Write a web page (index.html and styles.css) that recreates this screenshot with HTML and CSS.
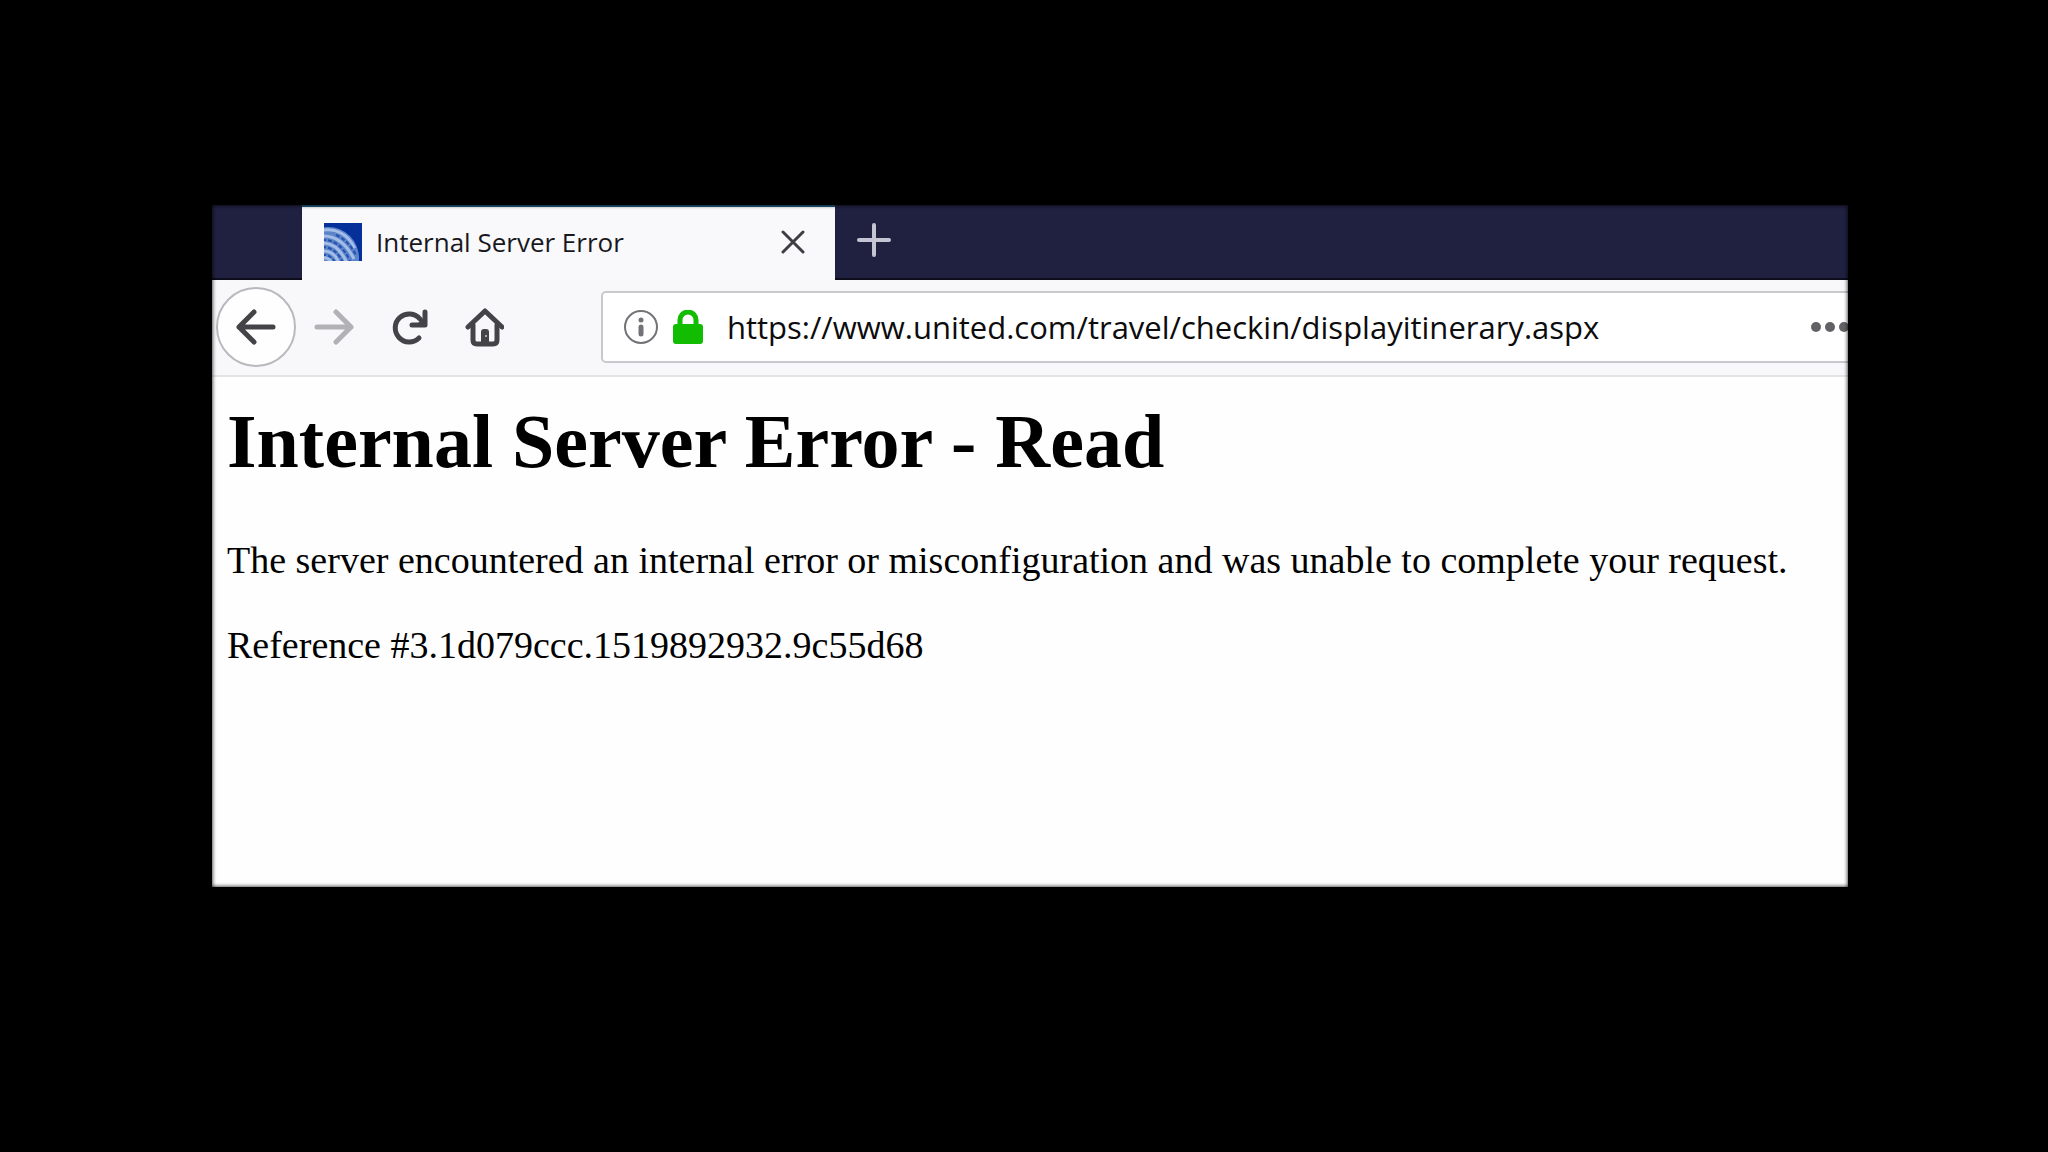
FILE: index.html
```html
<!DOCTYPE html>
<html lang="en">
<head>
  <meta charset="UTF-8" />
  <title>Internal Server Error</title>
  <link rel="stylesheet" href="styles.css">
</head>
<body>
  <div class="window">
    <div class="tabs">
      <div class="tab">
        <svg class="favicon" viewBox="0 0 38 38">
          <defs>
            <clipPath id="globe"><circle cx="4" cy="35" r="30" /></clipPath>
          </defs>
          <rect width="38" height="38" fill="#05309a" />
          <circle cx="4" cy="35" r="31" fill="#5c84cb" />
          <g clip-path="url(#globe)" fill="none" stroke="#a3bde6" stroke-width="3">
            <path d="M0 7 Q20 5 31 25" />
            <path d="M-2 13 Q18 12 30 36" />
            <path d="M-2 20 Q14 20 23 40" />
            <path d="M-2 28 Q10 27 15 40" />
            <path d="M-2 35 Q5 34 8 40" />
          </g>
          <g clip-path="url(#globe)" fill="none" stroke="#2550ac" stroke-width="2" stroke-dasharray="4 2">
            <path d="M-2 17 Q16 16 26 38" />
            <path d="M-2 24 Q12 24 19 40" />
            <path d="M-2 32 Q7 31 11 40" />
            <path d="M12 12 Q24 17 32 32" />
          </g>
        </svg>
        <span class="tab-title">Internal Server Error</span>
        <button class="tab-close" aria-label="Close tab">
          <svg width="24" height="24" viewBox="0 0 24 24">
            <path d="M2 2 L22 22 M22 2 L2 22" />
          </svg>
        </button>
      </div>
      <button class="new-tab" aria-label="New tab">
        <svg width="34" height="34" viewBox="0 0 34 34">
          <path d="M17 2 V32 M2 17 H32" />
        </svg>
      </button>
    </div>

    <div class="toolbar">
      <button class="nav-btn back" aria-label="Back">
        <svg width="40" height="40" viewBox="0 0 40 40">
          <path d="M37 20 H3 M18 5 L3 20 L18 35" />
        </svg>
      </button>
      <button class="nav-btn forward" aria-label="Forward" disabled>
        <svg width="40" height="40" viewBox="0 0 40 40">
          <path d="M3 20 H37 M22 5 L37 20 L22 35" />
        </svg>
      </button>
      <button class="nav-btn" aria-label="Reload">
        <svg width="40" height="40" viewBox="0 0 40 40">
          <path d="M30 31 A14 14 0 1 1 31 12" />
          <path d="M36 5 V18 H23" />
          <path class="solid" d="M36 9 V18 H27 Z" />
        </svg>
      </button>
      <button class="nav-btn" aria-label="Home">
        <svg width="40" height="40" viewBox="0 0 40 40">
          <path d="M4 20 L21 4 L38 20" />
          <path d="M9 18 V33 Q9 37 13 37 H29 Q33 37 33 33 V18" />
          <path class="solid" d="M17 37 V25 Q17 22 20 22 H22 Q25 22 25 25 V37 Z" />
          <circle class="knob" cx="22" cy="29" r="1" />
        </svg>
      </button>
      <div class="url-bar">
        <button class="info" aria-label="Site information">
          <svg width="36" height="36" viewBox="0 0 36 36">
            <circle cx="18" cy="18" r="16" />
            <path d="M18 18 V25" />
            <path d="M18 11 V11" />
          </svg>
        </button>
        <svg class="lock" width="30" height="34" viewBox="0 0 30 34">
          <path class="shackle" d="M7 17 V10 A8 8 0 0 1 23 10 V17" />
          <rect x="0" y="14" width="30" height="20" rx="3" />
        </svg>
        <input class="url" type="text" aria-label="Address" value="https://www.united.com/travel/checkin/displayitinerary.aspx" />
        <button class="more" aria-label="Page actions">
          <svg width="40" height="12" viewBox="0 0 40 12">
            <circle cx="6" cy="6" r="5" />
            <circle cx="20" cy="6" r="5" />
            <circle cx="34" cy="6" r="5" />
          </svg>
        </button>
      </div>
    </div>

    <main class="page">
      <h1>Internal Server Error - Read</h1>
      <p>The server encountered an internal error or misconfiguration and was unable to complete your request.</p>
      <p>Reference #3.1d079ccc.1519892932.9c55d68</p>
    </main>
  </div>
</body>
</html>
```

FILE: styles.css
```css
* {
  box-sizing: border-box;
}

body {
  margin: 0;
  min-height: 100vh;
  padding: 205px 200px 265px 212px;
  display: flex;
  background-color: #000;
  font-family: "Open Sans", "Noto Sans", sans-serif;
}

button {
  display: flex;
  align-items: center;
  justify-content: center;
  padding: 0;
  border: none;
  background: none;
  cursor: pointer;
}

svg {
  display: block;
  flex: none;
}

.window {
  flex: 1;
  min-width: 0;
  display: flex;
  flex-direction: column;
  position: relative;
  overflow: hidden;
  background-color: #fefefe;
}

/* soft dark edge round the whole window */
.window::after {
  content: "";
  position: absolute;
  inset: 0;
  box-shadow: inset 0 0 4px #000;
  pointer-events: none;
}

.tabs {
  display: flex;
  height: 75px;
  padding-left: 90px;
  background-color: #202140;
  box-shadow: inset 0 -2px 0 #0c0c1a;
}

.tab {
  display: flex;
  align-items: center;
  width: 533px;
  padding: 0 30px 4px 22px;
  background-color: #f9f9fc;
  border-top: 2px solid #1f5f80;
}

.favicon {
  width: 38px;
  height: 38px;
}

.tab-title {
  flex: 1;
  margin-left: 14px;
  font-size: 26px;
  color: #18181c;
}

.tab-close svg {
  fill: none;
  stroke: #3e3e42;
  stroke-width: 3;
  stroke-linecap: round;
}

.new-tab {
  width: 78px;
  padding-bottom: 6px;
}

.new-tab svg {
  fill: none;
  stroke: #c4c4d2;
  stroke-width: 4;
  stroke-linecap: round;
}

.toolbar {
  display: flex;
  align-items: center;
  height: 97px;
  padding: 0 0 2px 4px;
  background-color: #f8f8fb;
  border-bottom: 2px solid #e4e4e7;
}

.nav-btn {
  width: 75px;
  height: 80px;
  flex: none;
}

.nav-btn svg {
  fill: none;
  stroke: #444448;
  stroke-width: 5;
  stroke-linecap: round;
  stroke-linejoin: round;
}

.nav-btn .solid {
  fill: #444448;
  stroke: none;
}

.nav-btn .knob {
  fill: #ccc;
  stroke: none;
}

.back {
  width: 80px;
  border: 2px solid #b9b9bd;
  border-radius: 50%;
  background-color: #fefefe;
}

.forward svg {
  stroke: #b2b2b6;
}

/* runs on past the right edge of the window */
.url-bar {
  flex: 1;
  display: flex;
  align-items: center;
  height: 72px;
  margin-left: 80px;
  margin-right: -10px;
  padding: 0 6px 0 20px;
  background-color: #fff;
  border: 2px solid #c9c9cd;
  border-radius: 5px;
}

.info svg {
  fill: none;
  stroke: #737377;
  stroke-width: 2;
}

.info path {
  stroke-width: 5;
  stroke-linecap: round;
}

.lock {
  margin-left: 14px;
  fill: #12bc00;
}

.shackle {
  fill: none;
  stroke: #12bc00;
  stroke-width: 5;
}

.url {
  flex: 1;
  min-width: 0;
  margin-left: 24px;
  padding: 0;
  border: none;
  outline: none;
  background: none;
  font-family: inherit;
  font-size: 31px;
  color: #0c0c0d;
}

.more svg {
  fill: #626266;
}

.page {
  padding: 0 15px;
  font-family: "Liberation Serif", "Times New Roman", serif;
  font-size: 38px;
  line-height: 43px;
  color: #000;
}

.page h1 {
  margin: 20px 0 54px;
  font-size: 76px;
  line-height: 88px;
}

.page p {
  margin: 0 0 42px;
}
```
